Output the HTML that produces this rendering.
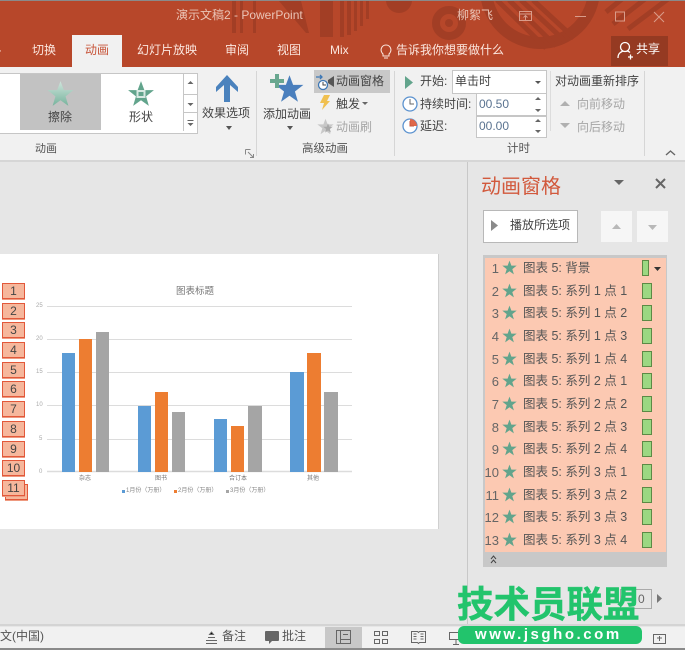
<!DOCTYPE html>
<html><head><meta charset="utf-8"><style>
html,body{margin:0;padding:0;width:685px;height:650px;overflow:hidden;background:#e6e6e6}
body{position:relative;font-family:"Liberation Sans","Noto Sans CJK SC",sans-serif;color:#444}
#p{position:absolute;left:0;top:0;width:685px;height:650px;filter:blur(.3px);overflow:hidden}
.a,.t{position:absolute}
.t{white-space:nowrap;line-height:1}
.w{color:#fbe6de;font-size:12px}
.g{color:#a6a6a6}
.b{position:absolute;left:2px;width:21px;height:14px;border:1px solid #e2583a;background:#f6b79c;text-align:center;font-size:12px;line-height:14px;color:#444;box-shadow:0 1px 0 #ee9a80}
.r{position:absolute;left:485px;width:181px;height:22px;font-size:12.500px;color:#555}
.r .n{position:absolute;right:167px;top:4px;line-height:14px;font-size:13px;color:#666}
.r svg{position:absolute;left:17px;top:2px}
.r .x{position:absolute;left:38px;top:3px;line-height:15px;white-space:pre}
.r i{position:absolute;left:157px;top:2px;width:8px;height:14px;background:#9bd882;border:1px solid #5c8a45}
.bar{position:absolute;width:13px}
</style></head><body><div id="p">
<svg width="0" height="0" style="position:absolute"><defs><symbol id="s" viewBox="0 0 24 24"><polygon points="12,1 15,9 23.500,9 16.500,14.500 19,23 12,18 5,23 7.500,14.500 .5,9 9,9"/></symbol><clipPath id="cb"><rect x="0" y="0" width="685" height="66"/></clipPath></defs></svg>

<!-- title bar -->
<div class="a" style="left:0;top:0;width:685px;height:1px;background:#8a8a8a"></div>
<div class="a" style="left:0;top:1px;width:685px;height:66px;background:#b7472a;overflow:hidden">
<svg width="685" height="66" style="position:absolute;left:0;top:0">
<g fill="#a23e25">
<rect x="232" y="0" width="4" height="32"/><rect x="240" y="0" width="3" height="32"/><rect x="253" y="0" width="3" height="32"/>
<path d="M279 0h22l8 32h-3z"/>
<rect x="320" y="0" width="13" height="36"/>
<path d="M340 0h4v36h-4zM347 0h4v34h-4zM354 0h3v30h-3zM360 0h3v25h-3zM366 0h3v18h-3z"/>
<circle cx="399" cy="-1" r="13"/>
</g>
<circle cx="449" cy="22" r="13" fill="none" stroke="#a23e25" stroke-width="8"/>
<circle cx="449" cy="22" r="4" fill="#a23e25"/>
<circle cx="540" cy="-12" r="54" fill="none" stroke="#a23e25" stroke-width="12"/>
<g stroke="#a23e25" stroke-width="5"><path d="M497 -1l49 48M509 -1l47 46M521 -1l45 42M533 -1l41 38"/></g>
<g stroke="#a23e25" stroke-width="5"><path d="M622 -2l-16 13M645 -2l-32 25M668 -2l-40 30"/></g>
</svg></div>
<div class="t" style="left:176px;top:9px;font-size:12px;color:#eac4b6">演示文稿2 - PowerPoint</div>
<div class="t" style="left:457px;top:9px;font-size:12px;color:#eac4b6">柳絮飞</div>
<svg class="a" style="left:515px;top:8px" width="170" height="24" fill="none" stroke="#d99c8a">
<path d="M4.500 3.500h12v9h-12zM4.500 6h12M10.500 12v-4M8.500 9.500l2-2 2 2"/>
<path d="M60 8.500h11"/><rect x="100.500" y="4" width="9" height="9"/><path d="M139 4l10 10M149 4l-10 10"/></svg>

<!-- tabs -->
<div class="t" style="left:-6px;top:44px;font-size:13px;color:#fbe6de;width:10px;overflow:hidden">+</div>
<div class="t w" style="left:32px;top:44px">切换</div>
<div class="a" style="left:72px;top:35px;width:50px;height:32px;background:#f1f1f1"></div>
<div class="t" style="left:85px;top:44px;font-size:12px;color:#c8553a">动画</div>
<div class="t w" style="left:137px;top:44px">幻灯片放映</div>
<div class="t w" style="left:225px;top:44px">审阅</div>
<div class="t w" style="left:277px;top:44px">视图</div>
<div class="t w" style="left:330px;top:44px">Mix</div>
<svg class="a" style="left:379px;top:44px" width="14" height="16" fill="none" stroke="#fbe6de"><path d="M4 10c-4-4-1-9 3-9s7 5 3 9v2H4zM5 14h4"/></svg>
<div class="t w" style="left:396px;top:44px">告诉我你想要做什么</div>
<div class="a" style="left:611px;top:36px;width:57px;height:30px;background:#953a22"></div>
<svg class="a" style="left:617px;top:41px" width="17" height="20" fill="none" stroke="#fff" stroke-width="1.300"><circle cx="8" cy="6" r="4.500"/><path d="M1 17c0-5 3-6 5-7M10 10c1 0 2 .5 3 1.500M11 16h5M13.500 13.500v5"/></svg>
<div class="t" style="left:636px;top:43px;font-size:12px;color:#fff">共享</div>

<!-- ribbon -->
<div class="a" style="left:0;top:67px;width:685px;height:93px;background:#f1f1f1;border-bottom:2px solid #d6d6d6"></div>
<div class="a" style="left:0;top:73px;width:197px;height:59px;background:#fff;border:solid #c6c6c6;border-width:1px 1px 1px 0"></div>
<div class="a" style="left:20px;top:74px;width:81px;height:56px;background:#c2c2c2"></div>
<svg class="a" style="left:47px;top:80px" width="27" height="27"><defs><linearGradient id="lg" x1="0" y1="0" x2="0" y2="1"><stop offset="0" stop-color="#cfe5dc"/><stop offset="1" stop-color="#77b39d"/></linearGradient></defs><use href="#s" fill="url(#lg)"/></svg>
<div class="t" style="left:48px;top:111px;font-size:12px;color:#444">擦除</div>
<svg class="a" style="left:127px;top:80px" width="28" height="27"><use href="#s" fill="#62a48c"/><rect x="10.500" y="11" width="7" height="6" fill="none" stroke="#d7e9e2" stroke-width="2"/></svg>
<div class="t" style="left:129px;top:111px;font-size:12px;color:#444">形状</div>
<div class="a" style="left:183px;top:74px;width:1px;height:57px;background:#c6c6c6"></div>
<div class="a" style="left:184px;top:94px;width:13px;height:1px;background:#c6c6c6"></div>
<div class="a" style="left:184px;top:112px;width:13px;height:1px;background:#c6c6c6"></div>
<svg class="a" style="left:184px;top:74px" width="13" height="58" fill="#666"><path d="M3.500 10l3-3 3 3zM3.500 29h6l-3 3zM3.500 46h6v1h-6zM3.500 49h6l-3 3z"/></svg>
<svg class="a" style="left:215px;top:74px" width="24" height="28"><path d="M12 1L1 13v5l8-7v17h6V11l8 7v-5z" fill="#4a82bd"/></svg>
<div class="t" style="left:202px;top:107px;font-size:12px">效果选项</div>
<svg class="a" style="left:225px;top:126px" width="8" height="5" fill="#555"><path d="M1 0h6L4 4z"/></svg>
<div class="t" style="left:35px;top:144px;font-size:11px;color:#555">动画</div>
<svg class="a" style="left:245px;top:149px" width="9" height="9" fill="none" stroke="#888"><path d="M.5 .5h5M.5 .5v5M3 3l5 5M8.500 5v3.500H5"/></svg>
<div class="a" style="left:256px;top:71px;width:1px;height:85px;background:#d6d6d6"></div>
<svg class="a" style="left:270px;top:74px" width="34" height="30"><use href="#s" x="5" y="0" width="29" height="29" fill="#4a7fbd"/><path d="M5 0h4v5h5v4H9v5H5V9H0V5h5z" fill="#69a78f"/></svg>
<div class="t" style="left:263px;top:108px;font-size:12px">添加动画</div>
<svg class="a" style="left:286px;top:126px" width="8" height="5" fill="#555"><path d="M1 0h6L4 4z"/></svg>
<div class="a" style="left:314px;top:70px;width:76px;height:23px;background:#c8c8c8"></div>
<svg class="a" style="left:316px;top:72px" width="20" height="20" fill="none"><path d="M0 5h6M4 3l2 2-2 2" stroke="#3d77b5" stroke-width="1.300"/><circle cx="7" cy="13" r="4.500" stroke="#3d77b5" fill="#fff" stroke-width="1.300"/><path d="M7 10v3h3" stroke="#444"/><path d="M12 8l6-4v11l-6-4z" fill="#555"/></svg>
<div class="t" style="left:336px;top:75px;font-size:12px">动画窗格</div>
<svg class="a" style="left:319px;top:95px" width="12" height="16"><path d="M5 0h6L8 6h3L3 15l2-7H1z" fill="#f0c050"/></svg>
<div class="t" style="left:336px;top:98px;font-size:12px">触发</div>
<svg class="a" style="left:362px;top:102px" width="7" height="4" fill="#666"><path d="M0 0h6L3 3z"/></svg>
<svg class="a" style="left:317px;top:118px" width="17" height="17"><use href="#s" fill="#c8c8c8"/><use href="#s" x="6" y="5" width="10" height="10" fill="#a8a8a8"/></svg>
<div class="t g" style="left:336px;top:121px;font-size:12px">动画刷</div>
<div class="t" style="left:302px;top:144px;font-size:11.500px;color:#555">高级动画</div>
<div class="a" style="left:394px;top:71px;width:1px;height:85px;background:#d6d6d6"></div>

<svg class="a" style="left:405px;top:76px" width="9" height="13"><path d="M0 0l8 6.500L0 13z" fill="#62a48c"/></svg>
<div class="t" style="left:420px;top:75px;font-size:12px">开始:</div>
<div class="a" style="left:452px;top:70px;width:93px;height:22px;background:#fff;border:1px solid #c6c6c6"></div>
<div class="t" style="left:455px;top:75px;font-size:12px">单击时</div>
<svg class="a" style="left:535px;top:81px" width="7" height="4" fill="#555"><path d="M0 0h6L3 3z"/></svg>
<svg class="a" style="left:401px;top:95px" width="18" height="18" fill="none"><circle cx="9" cy="9" r="7" stroke="#5b92cf" stroke-width="1.300" fill="#fff"/><path d="M9 4v5h4" stroke="#666"/></svg>
<div class="t" style="left:420px;top:98px;font-size:12px">持续时间:</div>
<div class="a" style="left:476px;top:93px;width:69px;height:21px;background:#fff;border:1px solid #c6c6c6"></div>
<div class="t" style="left:479px;top:98px;font-size:12px;color:#5a7390">00.50</div>
<svg class="a" style="left:401px;top:117px" width="18" height="18" fill="none"><circle cx="9" cy="9" r="7" stroke="#5b92cf" stroke-width="1.300" fill="#fff"/><path d="M9 2a7 7 0 0 1 7 7H9z" fill="#e0684a"/><path d="M9 4v5h4" stroke="#c85a3f"/></svg>
<div class="t" style="left:420px;top:120px;font-size:12px">延迟:</div>
<div class="a" style="left:476px;top:116px;width:69px;height:20px;background:#fff;border:1px solid #c6c6c6"></div>
<div class="t" style="left:479px;top:120px;font-size:12px;color:#5a7390">00.00</div>
<svg class="a" style="left:534px;top:96px" width="8" height="40" fill="#666"><path d="M1 4l3-3 3 3zM1 13h6l-3 3zM1 26l3-3 3 3zM1 34h6l-3 3z"/></svg>
<div class="a" style="left:550px;top:71px;width:1px;height:60px;background:#dcdcdc"></div>
<div class="t" style="left:555px;top:75px;font-size:12px">对动画重新排序</div>
<svg class="a" style="left:560px;top:100px" width="10" height="30" fill="#b0b0b0"><path d="M0 6l5-5 5 5zM0 23h10l-5 5z"/></svg>
<div class="t g" style="left:577px;top:98px;font-size:12px">向前移动</div>
<div class="t g" style="left:577px;top:121px;font-size:12px">向后移动</div>
<div class="t" style="left:507px;top:144px;font-size:11.500px;color:#555">计时</div>
<div class="a" style="left:644px;top:71px;width:1px;height:85px;background:#d6d6d6"></div>
<svg class="a" style="left:665px;top:149px" width="11" height="7" fill="none" stroke="#666" stroke-width="1.400"><path d="M1 6l4.500-4L10 6"/></svg>

<!-- slide -->
<div class="a" style="left:0;top:254px;width:438px;height:275px;background:#fff;border-right:1px solid #d0d0d0"></div>
<div class="t" style="left:176px;top:287px;font-size:9.500px;color:#777">图表标题</div>
<svg class="a" style="left:36px;top:300px" width="320" height="175" stroke="#dcdcdc"><path d="M11 6.500h305M11 39.500h305M11 72.500h305M11 105.500h305M11 139.500h305"/><path d="M11 171.500h305" stroke-width="1.500"/></svg>
<div class="t" style="left:36px;top:303px;font-size:6px;color:#aaa">25</div>
<div class="t" style="left:36px;top:336px;font-size:6px;color:#aaa">20</div>
<div class="t" style="left:36px;top:369px;font-size:6px;color:#aaa">15</div>
<div class="t" style="left:36px;top:402px;font-size:6px;color:#aaa">10</div>
<div class="t" style="left:39px;top:436px;font-size:6px;color:#aaa">5</div>
<div class="t" style="left:39px;top:469px;font-size:6px;color:#aaa">0</div>
<div class="bar" style="left:62px;top:353px;height:119px;background:#5b9bd5"></div>
<div class="bar" style="left:79px;top:339px;height:133px;background:#ed7d31"></div>
<div class="bar" style="left:96px;top:332px;height:140px;background:#a5a5a5"></div>
<div class="bar" style="left:138px;top:406px;height:66px;background:#5b9bd5"></div>
<div class="bar" style="left:155px;top:392px;height:80px;background:#ed7d31"></div>
<div class="bar" style="left:172px;top:412px;height:60px;background:#a5a5a5"></div>
<div class="bar" style="left:214px;top:419px;height:53px;background:#5b9bd5"></div>
<div class="bar" style="left:231px;top:426px;height:46px;background:#ed7d31"></div>
<div class="bar" style="left:248px;top:406px;height:66px;background:#a5a5a5;width:14px"></div>
<div class="bar" style="left:290px;top:372px;height:100px;background:#5b9bd5;width:14px"></div>
<div class="bar" style="left:307px;top:353px;height:119px;background:#ed7d31;width:14px"></div>
<div class="bar" style="left:324px;top:392px;height:80px;background:#a5a5a5;width:14px"></div>
<div class="t" style="left:79px;top:476px;font-size:6px;color:#777">杂志</div>
<div class="t" style="left:155px;top:476px;font-size:6px;color:#777">图书</div>
<div class="t" style="left:229px;top:476px;font-size:6px;color:#777">合订本</div>
<div class="t" style="left:307px;top:476px;font-size:6px;color:#777">其他</div>
<div class="a" style="left:122px;top:490px;width:3px;height:3px;background:#5b9bd5"></div>
<div class="t" style="left:126px;top:488px;font-size:6px;color:#888">1月份（万册）</div>
<div class="a" style="left:174px;top:490px;width:3px;height:3px;background:#ed7d31"></div>
<div class="t" style="left:178px;top:488px;font-size:6px;color:#888">2月份（万册）</div>
<div class="a" style="left:226px;top:490px;width:3px;height:3px;background:#a5a5a5"></div>
<div class="t" style="left:230px;top:488px;font-size:6px;color:#888">3月份（万册）</div>

<div class="b" style="top:283px">1</div>
<div class="b" style="top:303px">2</div>
<div class="b" style="top:322px">3</div>
<div class="b" style="top:342px">4</div>
<div class="b" style="top:362px">5</div>
<div class="b" style="top:381px">6</div>
<div class="b" style="top:401px">7</div>
<div class="b" style="top:421px">8</div>
<div class="b" style="top:441px">9</div>
<div class="b" style="top:460px">10</div>
<div class="b" style="left:5px;top:484px"></div>
<div class="b" style="top:480px">11</div>

<!-- pane -->
<div class="a" style="left:467px;top:162px;width:1px;height:465px;background:#c8c8c8"></div>
<div class="t" style="left:481px;top:177px;font-size:20px;color:#d2593c">动画窗格</div>
<svg class="a" style="left:614px;top:180px" width="10" height="6" fill="#666"><path d="M0 0h10L5 5z"/></svg>
<svg class="a" style="left:655px;top:178px" width="11" height="11" stroke="#666" stroke-width="2"><path d="M1 1l9 9M10 1l-9 9"/></svg>
<div class="a" style="left:483px;top:210px;width:93px;height:31px;background:#fff;border:1px solid #b8b8b8"></div>
<svg class="a" style="left:491px;top:220px" width="8" height="12"><path d="M0 0l7 5.500L0 11z" fill="#8a8a8a"/></svg>
<div class="t" style="left:510px;top:219px;font-size:12px">播放所选项</div>
<div class="a" style="left:601px;top:211px;width:31px;height:31px;background:#f6f6f6"></div>
<div class="a" style="left:637px;top:211px;width:31px;height:31px;background:#f6f6f6"></div>
<svg class="a" style="left:611px;top:223px" width="11" height="7" fill="#b8b8b8"><path d="M1 6l4.500-5L10 6z"/></svg>
<svg class="a" style="left:647px;top:224px" width="11" height="7" fill="#b8b8b8"><path d="M1 1h9L5.500 6z"/></svg>

<div class="a" style="left:483px;top:255px;width:184px;height:312px;background:#c8c8c8"></div>
<div class="a" style="left:485px;top:258px;width:181px;height:294px;background:#fcc9b2"></div>
<svg class="a" style="left:490px;top:555px" width="7" height="9" fill="none" stroke="#444"><path d="M1 4l2.500-3L6 4M1 8l2.500-3L6 8"/></svg>

<div class="r" style="top:258px"><span class="n">1</span><svg width="15" height="15"><use href="#s" fill="#62a48c"/></svg><span class="x">图表 5: 背景</span><i style="width:5px"></i></div>
<svg class="a" style="left:654px;top:267px" width="8" height="5" fill="#333"><path d="M0 0h7L3.500 4z"/></svg>
<div class="r" style="top:281px"><span class="n">2</span><svg width="15" height="15"><use href="#s" fill="#62a48c"/></svg><span class="x">图表 5: 系列 1 点 1</span><i></i></div>
<div class="r" style="top:303px"><span class="n">3</span><svg width="15" height="15"><use href="#s" fill="#62a48c"/></svg><span class="x">图表 5: 系列 1 点 2</span><i></i></div>
<div class="r" style="top:326px"><span class="n">4</span><svg width="15" height="15"><use href="#s" fill="#62a48c"/></svg><span class="x">图表 5: 系列 1 点 3</span><i></i></div>
<div class="r" style="top:349px"><span class="n">5</span><svg width="15" height="15"><use href="#s" fill="#62a48c"/></svg><span class="x">图表 5: 系列 1 点 4</span><i></i></div>
<div class="r" style="top:371px"><span class="n">6</span><svg width="15" height="15"><use href="#s" fill="#62a48c"/></svg><span class="x">图表 5: 系列 2 点 1</span><i></i></div>
<div class="r" style="top:394px"><span class="n">7</span><svg width="15" height="15"><use href="#s" fill="#62a48c"/></svg><span class="x">图表 5: 系列 2 点 2</span><i></i></div>
<div class="r" style="top:417px"><span class="n">8</span><svg width="15" height="15"><use href="#s" fill="#62a48c"/></svg><span class="x">图表 5: 系列 2 点 3</span><i></i></div>
<div class="r" style="top:439px"><span class="n">9</span><svg width="15" height="15"><use href="#s" fill="#62a48c"/></svg><span class="x">图表 5: 系列 2 点 4</span><i></i></div>
<div class="r" style="top:462px"><span class="n">10</span><svg width="15" height="15"><use href="#s" fill="#62a48c"/></svg><span class="x">图表 5: 系列 3 点 1</span><i></i></div>
<div class="r" style="top:485px"><span class="n">11</span><svg width="15" height="15"><use href="#s" fill="#62a48c"/></svg><span class="x">图表 5: 系列 3 点 2</span><i></i></div>
<div class="r" style="top:507px"><span class="n">12</span><svg width="15" height="15"><use href="#s" fill="#62a48c"/></svg><span class="x">图表 5: 系列 3 点 3</span><i></i></div>
<div class="r" style="top:530px"><span class="n">13</span><svg width="15" height="15"><use href="#s" fill="#62a48c"/></svg><span class="x">图表 5: 系列 3 点 4</span><i></i></div>

<!-- pane footer -->
<div class="a" style="left:620px;top:589px;width:30px;height:18px;border:1px solid #aaa"></div>
<div class="t" style="left:638px;top:593px;font-size:12px;color:#666">0</div>
<svg class="a" style="left:657px;top:594px" width="6" height="9" fill="#777"><path d="M0 0l5 4.500L0 9z"/></svg>

<!-- status bar -->
<div class="a" style="left:0;top:624px;width:685px;height:2px;background:#d4d4d4"></div>
<div class="a" style="left:0;top:627px;width:685px;height:21px;background:#f1f1f1"></div>
<div class="a" style="left:0;top:648px;width:685px;height:2px;background:#8a8a8a"></div>
<div class="t" style="left:0;top:630px;font-size:12px;color:#555">文(中国)</div>
<svg class="a" style="left:205px;top:631px" width="13" height="14" stroke="#666"><path d="M6.500 1l-2 2.500h4zM3 6.500h7M1 9.500h11M1 12.500h11"/></svg>
<div class="t" style="left:222px;top:630px;font-size:12px;color:#555">备注</div>
<svg class="a" style="left:265px;top:631px" width="15" height="14" fill="#666"><path d="M1 0h12a1 1 0 0 1 1 1v8a1 1 0 0 1-1 1H7l-3 3v-3H1a1 1 0 0 1-1-1V1a1 1 0 0 1 1-1z"/></svg>
<div class="t" style="left:282px;top:630px;font-size:12px;color:#555">批注</div>
<div class="a" style="left:325px;top:627px;width:37px;height:21px;background:#c8c8c8"></div>
<svg class="a" style="left:336px;top:630px" width="16" height="15" fill="none" stroke="#666"><rect x=".5" y=".5" width="14" height="13"/><path d="M4.500 .5v13M4.500 9.500h10M7 4.500h5"/></svg>
<svg class="a" style="left:374px;top:631px" width="15" height="13" fill="none" stroke="#666"><rect x=".5" y=".5" width="5" height="4"/><rect x="8.500" y=".5" width="5" height="4"/><rect x=".5" y="8.500" width="5" height="4"/><rect x="8.500" y="8.500" width="5" height="4"/></svg>
<svg class="a" style="left:411px;top:630px" width="15" height="14" fill="none" stroke="#666"><path d="M.5 1.500h6l1 1 1-1h6v11h-6l-1 1-1-1h-6zM2.500 4h3M2.500 6.500h3M2.500 9h3M9.500 4h3M9.500 6.500h3M9.500 9h3"/></svg>
<svg class="a" style="left:449px;top:632px" width="14" height="14" fill="none" stroke="#666"><path d="M.5 .5h13v7H.5zM7 7.500v5M4 12.500h6"/></svg>
<svg class="a" style="left:653px;top:634px" width="14" height="11" fill="none" stroke="#666"><rect x=".5" y=".5" width="12" height="9"/><path d="M4 4h5M6.500 2v5"/></svg>

<!-- watermark -->
<div class="t" style="left:457px;top:584px;font-size:36.500px;font-weight:700;color:#22c46c;-webkit-text-stroke:.4px #22c46c;font-family:'Noto Sans CJK SC',sans-serif">技术员联盟</div>
<div class="a" style="left:458px;top:626px;width:184px;height:18px;background:#22c46c;border-radius:6px"></div>
<div class="t" style="left:475px;top:627px;font-size:15px;font-weight:700;color:#fff;letter-spacing:2.550px">www.jsgho.com</div>
</div></body></html>
